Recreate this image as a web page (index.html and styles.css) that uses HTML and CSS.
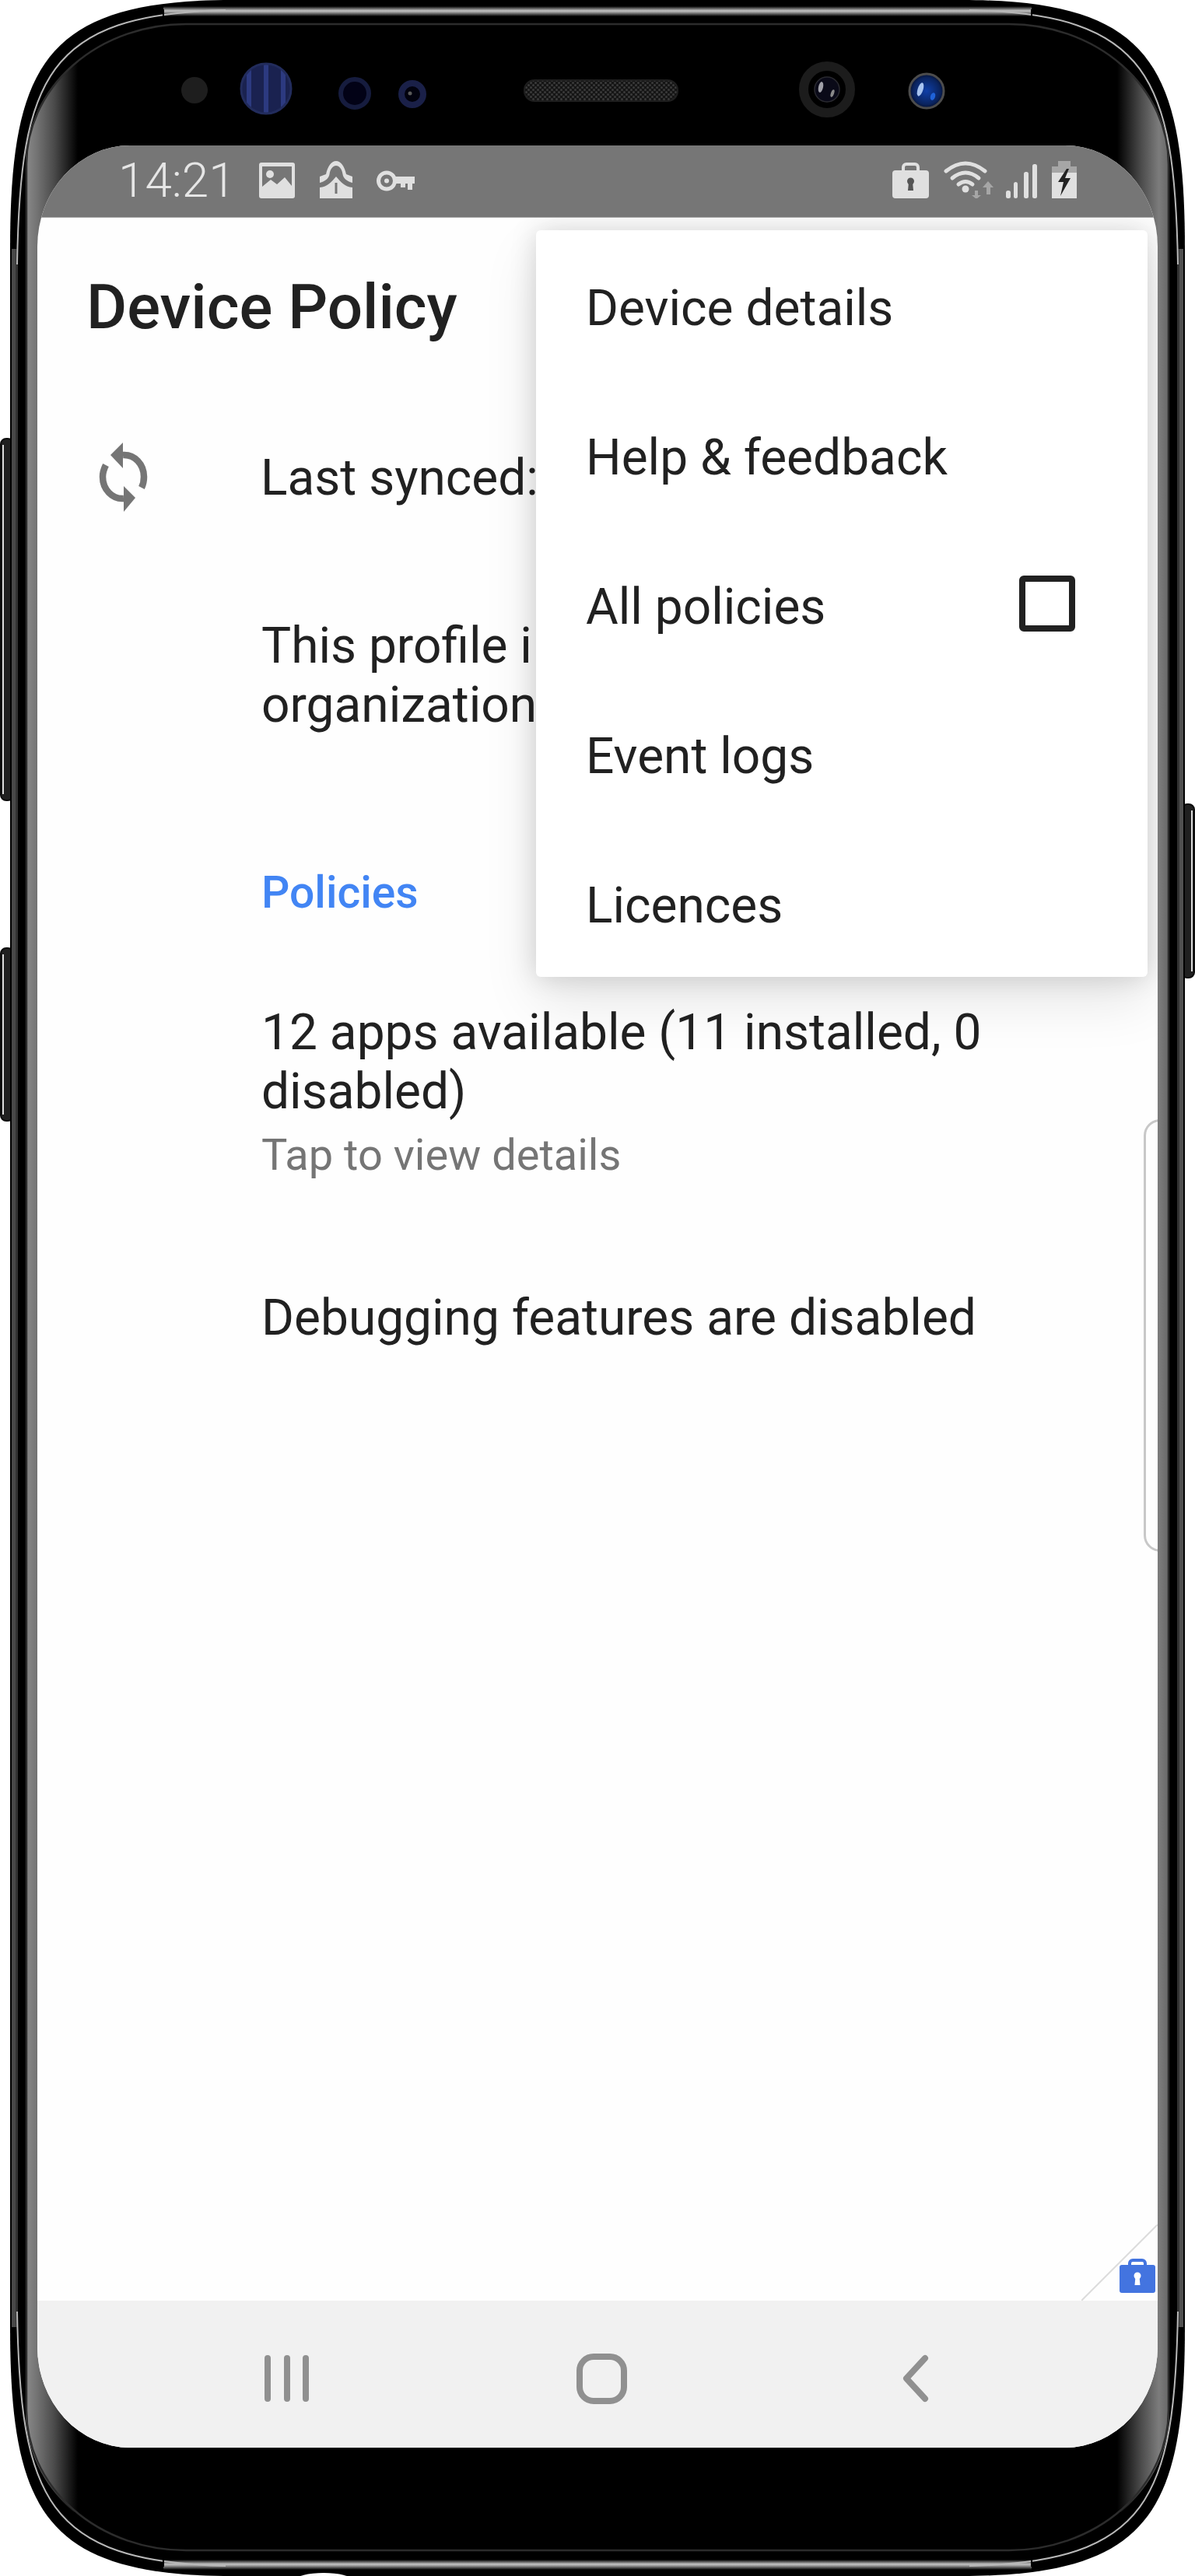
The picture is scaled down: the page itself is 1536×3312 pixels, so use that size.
FILE: index.html
```html
<!DOCTYPE html>
<html lang="en">
<head>
<meta charset="utf-8">
<title>Device Policy</title>
<link rel="stylesheet" href="styles.css">
</head>
<body>
<div class="phone">
  <svg class="frame" width="1536" height="3312" viewBox="0 0 1536 3312">
    <defs>
      <linearGradient id="band" x1="0" y1="0" x2="0" y2="1">
        <stop offset="0" stop-color="#000"/><stop offset=".45" stop-color="#c4c4c4"/><stop offset=".6" stop-color="#999"/><stop offset="1" stop-color="#000"/>
      </linearGradient>
      <linearGradient id="sideL" x1="0" y1="0" x2="1" y2="0">
        <stop offset="0" stop-color="#8a8a8a"/><stop offset=".2" stop-color="#757575"/><stop offset=".55" stop-color="#4a4a4a"/><stop offset="1" stop-color="#000"/>
      </linearGradient>
      <linearGradient id="sideR" x1="1" y1="0" x2="0" y2="0">
        <stop offset="0" stop-color="#666"/><stop offset=".2" stop-color="#7c7c7c"/><stop offset=".55" stop-color="#4a4a4a"/><stop offset="1" stop-color="#000"/>
      </linearGradient>
      <clipPath id="inner"><rect x="33" y="31" width="1470" height="3250" rx="205" ry="180"/></clipPath>
      <pattern id="mesh" width="6" height="6" patternUnits="userSpaceOnUse">
        <rect width="6" height="6" fill="#151515"/><circle cx="1.5" cy="1.5" r="1.5" fill="#3a3a3a"/><circle cx="4.5" cy="4.5" r="1.5" fill="#3a3a3a"/>
      </pattern>
      <pattern id="stripes" width="22" height="10" patternUnits="userSpaceOnUse" x="331">
        <rect width="22" height="10" fill="#1a2250"/><rect x="8" width="6" height="10" fill="#2c3a80"/>
      </pattern>
      <radialGradient id="blue" cx=".5" cy=".5" r=".55">
        <stop offset="0" stop-color="#0f3fa8"/><stop offset=".7" stop-color="#0a2460"/><stop offset="1" stop-color="#050a20"/>
      </radialGradient>
      <g id="corner">
        <path d="M22 340C26 100 60 18 290 13" fill="none" stroke="#b8b8b8" stroke-width="2"/>
        <path d="M175 12v12M210 12v12" stroke="#000" stroke-width="2"/>
      </g>
    </defs>

    <rect class="btn" x="1" y="564" width="16" height="465" rx="7"/>
    <rect class="btn" x="1" y="1219" width="16" height="222" rx="7"/>
    <rect class="btn" x="1519" y="1034" width="16" height="223" rx="7"/>
    <rect class="btn-hi" x="3" y="572" width="2" height="449"/>
    <rect class="btn-hi" x="3" y="1227" width="2" height="206"/>
    <rect class="btn-hi" x="1531" y="1042" width="2" height="207"/>

    <path d="M13 320C13 80 60 0 300 0H1236C1476 0 1523 80 1523 320V2992C1523 3232 1476 3312 1236 3312H300C60 3312 13 3232 13 2992Z" fill="#000"/>

    <g clip-path="url(#inner)">
      <rect x="33" y="80" width="67" height="3150" fill="url(#sideL)"/>
      <rect x="1436" y="80" width="67" height="3150" fill="url(#sideR)"/>
    </g>
    <rect x="34" y="31" width="1468" height="3248" rx="205" ry="180" fill="none" stroke="#2c2c2c" stroke-width="2.5"/>

    <rect x="15" y="320" width="5" height="2672" fill="#484848"/>
    <rect x="20" y="320" width="3" height="2672" fill="#333"/>
    <rect x="1513" y="320" width="3" height="2672" fill="#333"/>
    <rect x="1516" y="320" width="5" height="2672" fill="#505050"/>

    <rect x="210" y="8" width="1116" height="13" fill="url(#band)"/>
    <rect x="210" y="3291" width="1116" height="13" fill="url(#band)"/>
    <use href="#corner"/>
    <use href="#corner" transform="translate(1536 0) scale(-1 1)"/>
    <use href="#corner" transform="translate(0 3312) scale(1 -1)"/>
    <use href="#corner" transform="translate(1536 3312) scale(-1 -1)"/>
    <ellipse cx="416" cy="3317" rx="36" ry="9" fill="#fff"/>

    <circle cx="250" cy="116" r="17" fill="#1e1e1e"/>
    <circle cx="342" cy="114" r="32" fill="url(#stripes)" stroke="#222c5c" stroke-width="3"/>
    <circle cx="456" cy="120" r="18" fill="#020216" stroke="#161c3e" stroke-width="6"/>
    <circle cx="530" cy="121" r="14" fill="#02020e" stroke="#1a2048" stroke-width="8"/>
    <circle cx="527" cy="120" r="2.5" fill="#5a5a5a"/>
    <rect x="674" y="103" width="197" height="27" rx="13" fill="url(#mesh)" stroke="#1e1e1e" stroke-width="2"/>
    <circle cx="1063" cy="115" r="30" fill="#000" stroke="#1c1c1c" stroke-width="12"/>
    <circle cx="1063" cy="115" r="16" fill="#0a0a18" stroke="#2a2a30" stroke-width="1.5"/>
    <ellipse cx="1055" cy="112" rx="3" ry="7" fill="#a0a0a8" transform="rotate(12 1055 112)"/>
    <ellipse cx="1070" cy="120" rx="2" ry="5" fill="#8a8a8a" transform="rotate(20 1070 120)"/>
    <circle cx="1191" cy="117" r="22" fill="url(#blue)" stroke="#4c4c4c" stroke-width="3"/>
    <ellipse cx="1183" cy="115" rx="3.500" ry="9" fill="#a8c4f0" transform="rotate(18 1183 115)"/>
    <ellipse cx="1199" cy="124" rx="3" ry="5" fill="#1f62d8" transform="rotate(18 1199 124)"/>
  </svg>

  <div class="screen">
    <header class="statusbar">
      <span class="clock">14:21</span>
      <svg class="ic-image" width="46" height="46" viewBox="0 0 46 46">
        <rect width="46" height="46" rx="3" fill="#e0e0e0"/>
        <rect x="4" y="5" width="38" height="28" fill="#767676"/>
        <circle cx="14" cy="15" r="5" fill="#e0e0e0"/>
        <path d="M4 31l11-9 8 6 10-9 9 11v4H4z" fill="#e0e0e0"/>
      </svg>
      <svg class="ic-cone" width="42" height="48" viewBox="0 0 42 48">
        <path d="M0 48V20l8-3C10 7 15 0 21 0s11 7 13 17l8 3v28z" fill="#e0e0e0"/>
        <path d="M0 28C7 26 12 22 12.500 17 13.500 10 17 6 21 6s7.500 4 8.500 11C30 22 35 26 42 28v6H0z" fill="#767676"/>
        <path d="M0 34c10-1 15-7 21-14 6 7 11 13 21 14v14H0z" fill="#e0e0e0"/>
        <rect x="19.500" y="28" width="3" height="14" fill="#767676"/>
      </svg>
      <svg class="ic-key" width="49" height="27" viewBox="0 0 49 27">
        <circle cx="13" cy="13.500" r="10.500" fill="none" stroke="#e0e0e0" stroke-width="5"/>
        <circle cx="13" cy="13.500" r="3" fill="#e0e0e0"/>
        <path d="M24 8h25v9h-3v8h-6v-8h-3v5h-6v-5h-7z" fill="#e0e0e0"/>
      </svg>
      <div class="status-right">
        <svg class="ic-lock" width="47" height="46" viewBox="0 0 47 46">
          <rect x="14" y="2" width="19" height="14" rx="4" fill="none" stroke="#e0e0e0" stroke-width="4"/>
          <rect y="10" width="47" height="36" rx="4" fill="#e0e0e0"/>
          <circle cx="23.500" cy="24" r="4.500" fill="#555"/>
          <path d="M21 25h5l1 11h-7z" fill="#555"/>
        </svg>
        <svg class="ic-wifi" width="67" height="48" viewBox="0 0 67 48">
          <g fill="none" stroke="#e0e0e0" stroke-width="5" stroke-linecap="round">
            <path d="M3 13Q28-7 53 13"/><path d="M11 22Q28 8 45 22"/><path d="M19 30Q28 23 37 30"/>
          </g>
          <circle cx="28" cy="36" r="4.500" fill="#e0e0e0"/>
          <path d="M40 38h4v6h4l-6 5-6-5h4z" fill="#a6a6a6"/>
          <path d="M57 26l7 8h-4v9h-5v-9h-5z" fill="#a6a6a6"/>
        </svg>
        <svg class="ic-signal" width="40" height="44" viewBox="0 0 40 44">
          <rect y="34" width="6" height="10" rx="2.500" fill="#e0e0e0"/>
          <rect x="10" y="23" width="5" height="21" rx="2.500" fill="#e0e0e0"/>
          <rect x="23" y="10" width="6" height="34" rx="2.500" fill="#e0e0e0"/>
          <rect x="34" width="6" height="44" rx="2.500" fill="#e0e0e0"/>
        </svg>
        <svg class="ic-battery" width="32" height="48" viewBox="0 0 32 48">
          <rect x="8" width="16" height="8" fill="#a6a6a6"/>
          <rect y="7" width="32" height="8" fill="#a6a6a6"/>
          <rect y="15" width="32" height="33" fill="#e0e0e0"/>
          <path d="M19 10L8 27h7l-4 18 13-23h-7l5-12z" fill="#222"/>
        </svg>
      </div>
    </header>

    <main class="content">
      <h1 class="title">Device Policy</h1>
      <section class="row row-sync">
        <svg class="ic-sync" width="72" height="92" viewBox="0 0 72 92">
          <path d="M33 18C48 17 60 30 60 46c0 5-1 10-3 14" fill="none" stroke="#757575" stroke-width="8.500"/>
          <path d="M33 2L17 18l16 17z" fill="#757575"/>
          <path d="M34 74C19 75 7 62 7 46c0-6 2-11 4-15" fill="none" stroke="#757575" stroke-width="8.500"/>
          <path d="M34 58l15 15-15 18z" fill="#757575"/>
        </svg>
        <p class="body">Last synced:</p>
      </section>
      <div class="profile">
        <p class="body">This profile i</p>
        <p class="body">organization</p>
      </div>
      <h2 class="section-head">Policies</h2>
      <div class="pref">
        <p class="body">12 apps available (11 installed, 0 disabled)</p>
        <p class="sub">Tap to view details</p>
      </div>
      <p class="body debug">Debugging features are disabled</p>

      <div class="edge-handle"></div>
      <svg class="badge-line" width="98" height="98" viewBox="0 0 98 98"><path d="M0 98L98 0" stroke="#dcdcdc" stroke-width="2"/></svg>
      <svg class="badge-lock" width="46" height="44" viewBox="0 0 46 44">
        <rect x="13" y="2" width="20" height="14" rx="4" fill="none" stroke="#4374e0" stroke-width="4"/>
        <rect y="8" width="46" height="36" rx="3" fill="#4374e0"/>
        <circle cx="23" cy="22" r="4.500" fill="#fff"/>
        <path d="M20.500 23h5l1 11h-7z" fill="#fff"/>
      </svg>

      <nav class="menu">
        <div class="menu-item">Device details</div>
        <div class="menu-item">Help &amp; feedback</div>
        <div class="menu-item">All policies<span class="checkbox"></span></div>
        <div class="menu-item">Event logs</div>
        <div class="menu-item">Licences</div>
      </nav>
    </main>

    <footer class="navbar">
      <svg class="nav-recent" width="58" height="60" viewBox="0 0 58 60">
        <path d="M4 4v52M29 4v52M53 4v52" stroke="#909090" stroke-width="8" stroke-linecap="round" fill="none"/>
      </svg>
      <span class="nav-home"></span>
      <svg class="nav-back" width="36" height="62" viewBox="0 0 36 62">
        <path d="M30 5L6 31l24 26" fill="none" stroke="#909090" stroke-width="8" stroke-linecap="round" stroke-linejoin="round"/>
      </svg>
    </footer>
  </div>
</div>
</body>
</html>
```
FILE: styles.css
```css
html, body {
  margin: 0;
  padding: 0;
  background: #fff;
}

body {
  width: 1536px;
  height: 3312px;
  overflow: hidden;
  font-family: Roboto, "Liberation Sans", sans-serif;
  color: #212121;
}

.phone {
  position: relative;
  width: 1536px;
  height: 3312px;
  padding: 187px 48px 165px;
  box-sizing: border-box;
}

.frame {
  position: absolute;
  left: 0;
  top: 0;
}

.btn {
  fill: #202020;
  stroke: #0c0c0c;
  stroke-width: 2;
}

.btn-hi {
  fill: #dcdcdc;
}

.screen {
  position: relative;
  display: flex;
  flex-direction: column;
  height: 100%;
  overflow: hidden;
  border-radius: 119px / 130px;
  background: #fefefe;
}

.statusbar {
  position: relative;
  z-index: 2;
  flex: none;
  display: flex;
  align-items: flex-end;
  height: 93px;
  box-sizing: border-box;
  padding: 0 104px 24px 104px;
  background: #767676;
  border-bottom: 1px solid #a8a8a8;
}

.clock {
  font-size: 62px;
  font-weight: 300;
  line-height: 46px;
  color: #e6e6e6;
  margin-right: 30px;
}

.ic-image { margin-right: 32px; }
.ic-cone { margin-right: 31px; }
.ic-key { margin-bottom: 9px; }

.status-right {
  display: flex;
  align-items: flex-end;
  margin-left: auto;
}

.ic-lock { margin-right: 19px; }
.ic-wifi { margin-right: 13px; }
.ic-signal { margin-right: 19px; }

.content {
  position: relative;
  flex: 1;
  padding: 0 64px;
}

.title {
  margin: 65px 0 0 -1px;
  font-size: 80px;
  font-weight: 500;
  line-height: 100px;
}

.row-sync {
  display: flex;
  align-items: center;
  margin: 122px 0 0 13px;
}

.ic-sync {
  flex: none;
  margin: 0 138px 4px 0;
}

.body {
  margin: 0;
  font-size: 64px;
  line-height: 76px;
  color: #212121;
}

.profile {
  margin: 130px 0 0 224px;
}

.section-head {
  margin: 165px 0 0 224px;
  font-size: 57px;
  font-weight: 500;
  line-height: 76px;
  color: #4285f4;
}

.pref {
  width: 1040px;
  margin: 104px 0 0 224px;
}

.sub {
  margin: 5px 0 0;
  font-size: 56px;
  line-height: 76px;
  color: #757575;
}

.debug {
  margin: 134px 0 0 224px;
}

.edge-handle {
  position: absolute;
  right: -24px;
  top: 1159px;
  width: 36px;
  height: 550px;
  border: 3px solid #c8c8c8;
  border-radius: 22px;
}

.badge-line {
  position: absolute;
  right: 0;
  bottom: 0;
}

.badge-lock {
  position: absolute;
  right: 3px;
  bottom: 10px;
}

.menu {
  position: absolute;
  left: 641px;
  top: 16px;
  width: 786px;
  background: #fff;
  border-radius: 6px;
  box-shadow: 0 0 34px rgba(0, 0, 0, 0.15), 0 30px 70px rgba(0, 0, 0, 0.1);
}

.menu-item {
  display: flex;
  align-items: center;
  justify-content: space-between;
  box-sizing: border-box;
  height: 192px;
  padding: 8px 93px 0 64px;
  font-size: 64px;
  color: #212121;
}

.checkbox {
  width: 72px;
  height: 72px;
  box-sizing: border-box;
  margin-bottom: 8px;
  border: 8px solid #212121;
  border-radius: 6px;
}

.navbar {
  flex: none;
  display: flex;
  align-items: center;
  height: 189px;
  padding: 0 0 0 292px;
  box-sizing: border-box;
  background: #f1f1f1;
}

.nav-recent {
  margin: 11px 0 0;
}

.nav-home {
  display: block;
  width: 65px;
  height: 65px;
  box-sizing: border-box;
  margin: 11px 0 0 343px;
  border: 8px solid #909090;
  border-radius: 22px;
}

.nav-back {
  margin: 11px 0 0 353px;
}
```
